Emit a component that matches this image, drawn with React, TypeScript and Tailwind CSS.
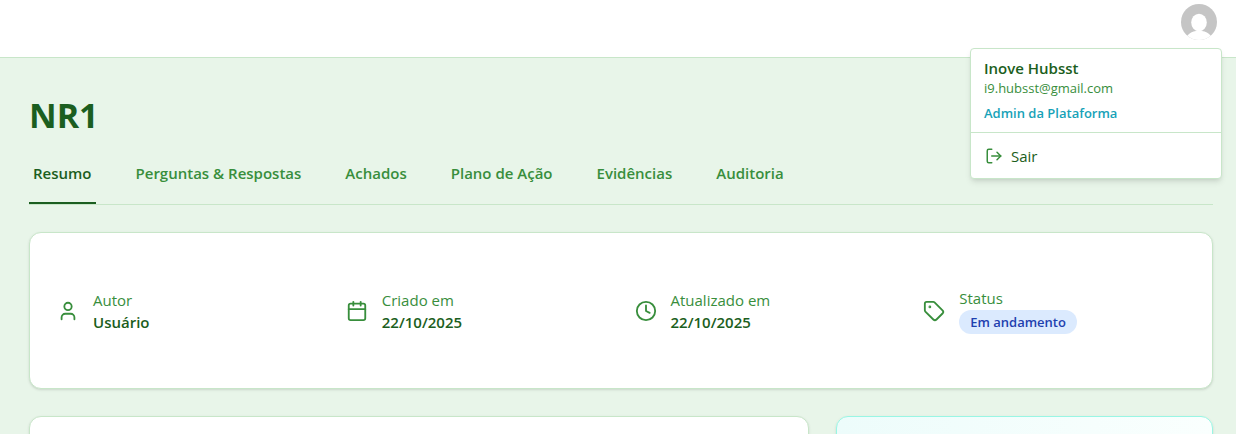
import { Calendar, Clock, LogOut, Tag, User } from "lucide-react";
import type { LucideIcon } from "lucide-react";
import type { ReactNode } from "react";
import { useState } from "react";

const tabs = ["Resumo", "Perguntas & Respostas", "Achados", "Plano de Ação", "Evidências", "Auditoria"];

function Avatar() {
  return (
    <svg viewBox="0 0 36 36" className="size-9" aria-hidden="true">
      <defs>
        <clipPath id="avatar-clip">
          <circle cx="18" cy="18" r="18" />
        </clipPath>
      </defs>
      <g clipPath="url(#avatar-clip)">
        <rect width="36" height="36" fill="#c5c5c5" />
        <ellipse cx="18" cy="18.5" rx="7.8" ry="8.8" fill="#fff" />
        <path d="M6 32C8.500 29 11.500 27.600 15 27h6c3.500.6 6.500 2 9 5v4H6z" fill="#fff" />
      </g>
    </svg>
  );
}

function UserMenu() {
  return (
    <div className="absolute top-12 right-[14px] z-10 w-[252px] rounded border border-[#c8e6c9] bg-white shadow-md">
      <div className="border-b border-[#c8e6c9] px-[13px] pt-2 pb-[10px]">
        <p className="text-[15px] leading-[22px] font-semibold text-[#1b5e20]">Inove Hubsst</p>
        <p className="text-[13px] leading-[18px] text-[#388e3c]">i9.hubsst@gmail.com</p>
        <p className="mt-[7px] text-[13px] leading-[18px] font-semibold text-[#17a2b8]">Admin da Plataforma</p>
      </div>
      <button type="button" className="flex w-full items-center gap-2 px-[14px] pt-3 pb-[11px] text-[15px] leading-[22px] text-[#1b5e20]">
        <LogOut className="size-[18px] text-[#388e3c]" />
        Sair
      </button>
    </div>
  );
}

function Info({ icon: Icon, label, children }: { icon: LucideIcon; label: string; children: ReactNode }) {
  return (
    <div className="flex items-center gap-[14px]">
      <Icon className="size-[22px] shrink-0 text-[#388e3c]" />
      <div>
        <p className="text-[15px] leading-[22px] text-[#388e3c]">{label}</p>
        {children}
      </div>
    </div>
  );
}

function Value({ children }: { children: ReactNode }) {
  return <p className="text-[15px] leading-[22px] font-semibold text-[#1b5e20]">{children}</p>;
}

export default function App() {
  const [active, setActive] = useState("Resumo");
  return (
    <div className="relative flex h-screen flex-col overflow-hidden bg-[#e8f5e9] font-['Open_Sans','Noto_Sans',sans-serif]">
      <header className="flex shrink-0 justify-end border-b border-[#c8e6c9] bg-white px-[19px] pt-1 pb-[17px]">
        <button type="button" aria-label="Menu do usuário" className="rounded-full">
          <Avatar />
        </button>
      </header>
      <UserMenu />
      <main className="flex flex-col pt-9 pr-[23px] pl-[29px]">
        <h1 className="text-[34px] leading-[42px] font-bold text-[#1b5e20]">NR1</h1>
        <nav className="mt-[14px] flex gap-9 border-b border-[#c8e6c9]">
          {tabs.map((tab) => (
            <button
              key={tab}
              type="button"
              onClick={() => setActive(tab)}
              className={
                tab === active
                  ? "border-b-2 border-[#1b5e20] px-1 pt-3 pb-[18px] text-[15px] leading-[22px] font-semibold text-[#1b5e20]"
                  : "border-b-2 border-transparent px-1 pt-3 pb-[18px] text-[15px] leading-[22px] font-semibold text-[#388e3c]"
              }
            >
              {tab}
            </button>
          ))}
        </nav>
        <section className="mt-[27px] grid grid-cols-4 gap-[27px] rounded-xl border border-[#c8e6c9] bg-white px-[27px] py-[54px] shadow-sm">
          <Info icon={User} label="Autor">
            <Value>Usuário</Value>
          </Info>
          <Info icon={Calendar} label="Criado em">
            <Value>22/10/2025</Value>
          </Info>
          <Info icon={Clock} label="Atualizado em">
            <Value>22/10/2025</Value>
          </Info>
          <Info icon={Tag} label="Status">
            <span className="mt-px block rounded-full bg-[#dbeafe] px-[11px] py-[3px] text-[13px] leading-[18px] font-semibold text-[#1e40af]">
              Em andamento
            </span>
          </Info>
        </section>
        <div className="mt-[27px] grid grid-cols-3 gap-[27px]">
          <section className="col-span-2 min-h-40 rounded-xl border border-[#c8e6c9] bg-white shadow-sm" />
          <section className="min-h-40 rounded-xl border border-[#99f6e4] bg-linear-to-r from-[#edfcfb] to-[#fafffe] shadow-sm" />
        </div>
      </main>
    </div>
  );
}
